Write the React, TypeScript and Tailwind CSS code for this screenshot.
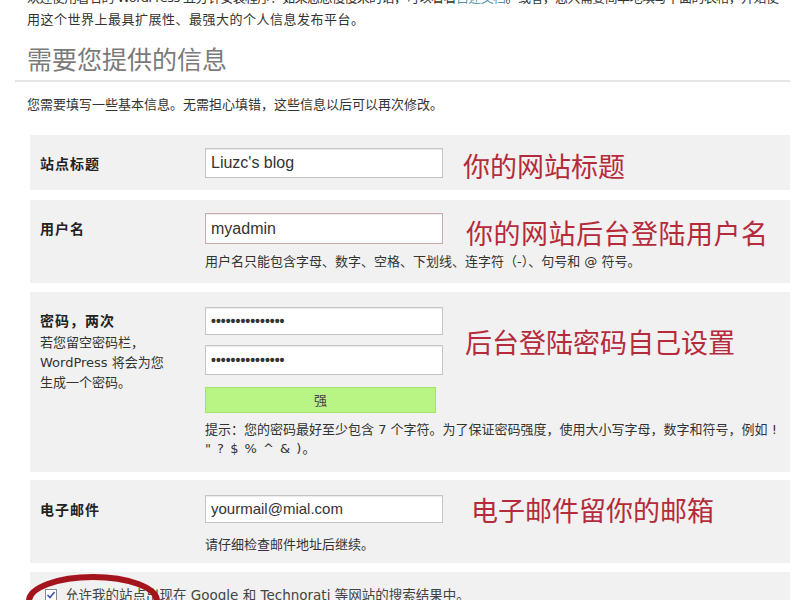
import React from "react";

const cjk = { fontFamily: '"DejaVu Sans", "Noto Sans CJK SC", sans-serif' };
const plain = { fontFamily: '"Noto Sans CJK SC", sans-serif' };
const field = { fontFamily: '"Liberation Sans", "Noto Sans CJK SC", sans-serif' };

function Box({ children, h, className = "" }: { children?: React.ReactNode; h: string; className?: string }) {
  return (
    <div
      className={`w-[238px] ${h} border border-[#c4c4c4] bg-white flex items-center px-[5px] text-[#333] shadow-[inset_0_1px_1px_rgba(0,0,0,0.08)] ${className}`}
      style={field}
    >
      {children}
    </div>
  );
}

function Note({ children, className = "" }: { children: React.ReactNode; className?: string }) {
  return (
    <div className={`text-[#b52b3b] leading-none whitespace-nowrap ${className}`} style={plain}>
      {children}
    </div>
  );
}

function Label({ children }: { children: React.ReactNode }) {
  return (
    <div className="text-[14px] font-bold tracking-[1px] text-[#222]" style={plain}>
      {children}
    </div>
  );
}

export default function App() {
  return (
    <div className="w-[800px] h-[600px] bg-white overflow-hidden pl-[27px]">
      <div className="mt-[-13px] text-[13px] leading-[22px] text-[#333] whitespace-nowrap" style={cjk}>
        <span className="tracking-[-0.6px]">
          欢迎使用著名的 WordPress 五分钟安装程序！如果您想慢慢来的话，可以看看
          <span className="text-[#5a9aa8]">自述文档</span>。或者，您只需要简单地填写下面的表格，开始使
        </span>
        <br />
        <span className="tracking-[0.5px]">用这个世界上最具扩展性、最强大的个人信息发布平台。</span>
      </div>

      <h1 className="mt-[12px] text-[25px] leading-[30px] text-[#7a7a7a]" style={plain}>
        需要您提供的信息
      </h1>
      <div className="mt-[7px] -ml-[12px] w-[775px] h-[2px] bg-[#e6e6e6]" />

      <p className="mt-[13px] text-[13px] leading-[20px] text-[#333]" style={cjk}>
        您需要填写一些基本信息。无需担心填错，这些信息以后可以再次修改。
      </p>

      {/* 站点标题 */}
      <div className="mt-[20px] ml-[3px] w-[760px] bg-[#f1f1f1] flex pt-[13px] pb-[12px]">
        <div className="w-[175px] pl-[10px] h-[30px] flex items-center">
          <Label>站点标题</Label>
        </div>
        <div className="flex items-center">
          <Box h="h-[30px]" className="text-[16px]">Liuzc's blog</Box>
          <Note className="ml-[20px] text-[27px] translate-y-[2px]">你的网站标题</Note>
        </div>
      </div>

      {/* 用户名 */}
      <div className="mt-[10px] ml-[3px] w-[760px] bg-[#f1f1f1] flex pt-[13px] pb-[11px]">
        <div className="w-[175px] pl-[10px] h-[31px] flex items-center">
          <Label>用户名</Label>
        </div>
        <div>
          <div className="flex items-center">
            <Box h="h-[31px]" className="text-[16px] border-[#c9a9a9]">myadmin</Box>
            <Note className="ml-[23px] text-[27px] tracking-[0.5px] translate-y-[4px]">你的网站后台登陆用户名</Note>
          </div>
          <div className="mt-[8px] text-[13px] leading-[20px] text-[#333] whitespace-nowrap" style={cjk}>
            用户名只能包含字母、数字、空格、下划线、连字符（-）、句号和 @ 符号。
          </div>
        </div>
      </div>

      {/* 密码 */}
      <div className="mt-[9px] ml-[3px] w-[760px] bg-[#f1f1f1] flex pt-[15px] pb-[14px]">
        <div className="w-[175px] pl-[10px] pt-[3px]">
          <Label>密码，两次</Label>
          <div className="mt-[2px] text-[13px] leading-[20px] text-[#333] whitespace-nowrap" style={cjk}>
            若您留空密码栏，
            <br />
            WordPress 将会为您
            <br />
            生成一个密码。
          </div>
        </div>
        <div>
          <div className="flex items-center">
            <div>
              <Box h="h-[28px]" className="text-[14px] font-bold">
                •••••••••••••••
              </Box>
              <Box h="h-[30px]" className="mt-[10px] text-[14px] font-bold">
                •••••••••••••••
              </Box>
            </div>
            <Note className="ml-[22px] text-[27px]">后台登陆密码自己设置</Note>
          </div>
          <div
            className="mt-[12px] w-[231px] h-[26px] bg-[#b9f584] border border-[#a6e06f] flex items-center justify-center text-[13px] text-[#444]"
            style={plain}
          >
            强
          </div>
          <div className="mt-[7px] text-[13px] leading-[19px] text-[#333] whitespace-nowrap" style={cjk}>
            提示：您的密码最好至少包含 7 个字符。为了保证密码强度，使用大小写字母，数字和符号，例如 !
            <br />
            <span className="tracking-[1px]">" ? $ % ^ &amp; )。</span>
          </div>
        </div>
      </div>

      {/* 电子邮件 */}
      <div className="mt-[8px] ml-[3px] w-[760px] bg-[#f1f1f1] flex pt-[15px] pb-[8px]">
        <div className="w-[175px] pl-[10px] h-[28px] flex items-center">
          <Label>电子邮件</Label>
        </div>
        <div>
          <div className="flex items-center">
            <Box h="h-[28px]" className="text-[15px]">yourmail@mial.com</Box>
            <Note className="ml-[28px] text-[27px]">电子邮件留你的邮箱</Note>
          </div>
          <div className="mt-[12px] text-[13px] leading-[20px] text-[#333]" style={cjk}>
            请仔细检查邮件地址后继续。
          </div>
        </div>
      </div>

      {/* 搜索引擎 */}
      <div className="relative mt-[9px] ml-[3px] w-[760px] h-[60px] bg-[#f1f1f1] pt-[16px] pl-[15px] flex items-start">
        <svg width="12" height="12" viewBox="0 0 12 12" className="mt-[1px]">
          <rect x="0.5" y="0.5" width="11" height="11" fill="#fff" stroke="#8a8a8a" />
          <path d="M2.5 6 L5 8.5 L9.5 3" fill="none" stroke="#3a5aa8" strokeWidth="1.6" />
        </svg>
        <span className="ml-[8px] text-[13.5px] leading-[14px] text-[#444]" style={cjk}>
          允许我的站点出现在 Google 和 Technorati 等网站的搜索结果中。
        </span>
        <svg
          width="150"
          height="56"
          viewBox="0 0 150 56"
          className="absolute left-[-6px] top-[0px] pointer-events-none"
        >
          <ellipse cx="69" cy="29" rx="64" ry="24" fill="none" stroke="#a3141c" strokeWidth="6" />
        </svg>
      </div>
    </div>
  );
}
